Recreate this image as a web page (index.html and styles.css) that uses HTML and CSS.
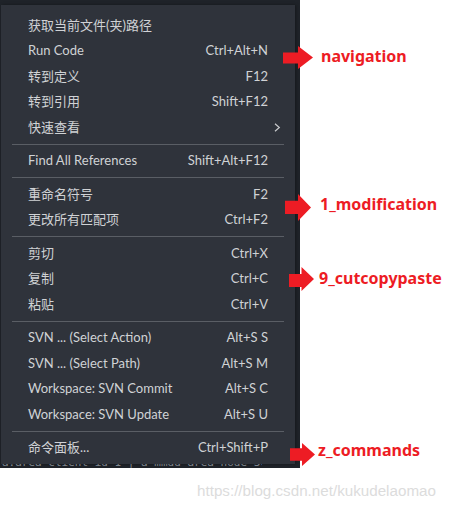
FILE: index.html
```html
<!DOCTYPE html>
<html lang="zh-CN">
<head>
<meta charset="utf-8">
<title>Context menu</title>
<link rel="stylesheet" href="styles.css">
</head>
<body>
<div class="canvas">
  <div class="editor">
    <div class="menu">
      <div class="row"><span class="label">获取当前文件(夹)路径</span><span class="key"></span></div>
      <div class="row"><span class="label">Run Code</span><span class="key">Ctrl+Alt+N</span></div>
      <div class="row"><span class="label">转到定义</span><span class="key">F12</span></div>
      <div class="row"><span class="label">转到引用</span><span class="key">Shift+F12</span></div>
      <div class="row"><span class="label">快速查看</span><span class="key"></span>
        <svg class="chev" width="7" height="9" viewBox="0 0 7 9"><polyline points="1,0.8 5.3,4.5 1,8.2" fill="none" stroke="#c8cacd" stroke-width="1.2"/></svg>
      </div>
      <div class="sep"></div>
      <div class="row"><span class="label">Find All References</span><span class="key">Shift+Alt+F12</span></div>
      <div class="sep"></div>
      <div class="row"><span class="label">重命名符号</span><span class="key">F2</span></div>
      <div class="row"><span class="label">更改所有匹配项</span><span class="key">Ctrl+F2</span></div>
      <div class="sep"></div>
      <div class="row"><span class="label">剪切</span><span class="key">Ctrl+X</span></div>
      <div class="row"><span class="label">复制</span><span class="key">Ctrl+C</span></div>
      <div class="row"><span class="label">粘贴</span><span class="key">Ctrl+V</span></div>
      <div class="sep"></div>
      <div class="row"><span class="label">SVN ... (Select Action)</span><span class="key">Alt+S S</span></div>
      <div class="row"><span class="label">SVN ... (Select Path)</span><span class="key">Alt+S M</span></div>
      <div class="row"><span class="label">Workspace: SVN Commit</span><span class="key">Alt+S C</span></div>
      <div class="row"><span class="label">Workspace: SVN Update</span><span class="key">Alt+S U</span></div>
      <div class="sep"></div>
      <div class="row"><span class="label">命令面板...</span><span class="key">Ctrl+Shift+P</span></div>
    </div>
    <div class="peek"><span>a.area client-id 1 | a-mmdd area-node 3c</span></div>
  </div>
  <div class="watermark">https://blog.csdn.net/kukudelaomao</div>

  <svg class="arrow a1" width="30" height="23" viewBox="0 0 30 23"><polygon points="0,6.5 15,6.5 15,0 30,11.5 15,23 15,17.5 0,17.5" fill="#ed1c24"/></svg>
  <span class="note t1">navigation</span>

  <svg class="arrow a2" width="26" height="27" viewBox="0 0 26 27"><polygon points="0,6.8 13,6.8 13,0 26,13.5 13,27 13,20 0,20" fill="#ed1c24"/></svg>
  <span class="note t2">1_modification</span>

  <svg class="arrow a3" width="25" height="24" viewBox="0 0 25 24"><polygon points="0,7 12.5,7 12.5,0 25,12 12.5,24 12.5,20 0,20" fill="#ed1c24"/></svg>
  <span class="note t3">9_cutcopypaste</span>

  <svg class="arrow a4" width="25" height="23" viewBox="0 0 25 23"><polygon points="0,5.3 12,5.3 12,0 25,11.5 12,23 12,17.7 0,17.7" fill="#ed1c24"/></svg>
  <span class="note t4">z_commands</span>
</div>
</body>
</html>
```

FILE: styles.css
```css
html, body {
  margin: 0;
  padding: 0;
  background: #ffffff;
}

.canvas {
  position: relative;
  width: 456px;
  height: 508px;
  overflow: hidden;
  background: #ffffff;
}

.editor {
  width: 300px;
  height: 468px;
  background: #1f2329;
  padding-top: 5px;
  box-sizing: border-box;
  display: flex;
  flex-direction: column;
}

.menu {
  width: 294px;
  margin-left: 1px;
  background: #2f333b;
  padding: 7.5px 0 3.5px 0;
  box-shadow: 1px 0 3px rgba(0, 0, 0, 0.35);
  font-family: Lato, "Noto Sans CJK SC", sans-serif;
  font-size: 13px;
  color: #d0d2d5;
}

.row {
  display: grid;
  grid-template-columns: 1fr auto 27px;
  align-items: center;
  height: 25.5px;
  line-height: 25.5px;
  padding-left: 27px;
  white-space: nowrap;
}

.key {
  text-align: right;
}

.chev {
  display: block;
  margin-left: 6px;
}

.sep {
  height: 1px;
  margin: 3.5px 11px 3.5px 11px;
  background: #5a5e65;
}

.peek {
  width: 260px;
  height: 4px;
  overflow: hidden;
  padding-left: 2px;
  font-family: "DejaVu Sans Mono", monospace;
  font-size: 11px;
  line-height: 12px;
  color: #7f858d;
  white-space: nowrap;
}

.peek span {
  display: block;
  margin-top: -7px;
}

.watermark {
  margin-top: 14px;
  padding-left: 197px;
  font-family: "Liberation Sans", Arial, sans-serif;
  font-size: 15.2px;
  line-height: 18px;
  color: #dcdcdc;
  white-space: nowrap;
}

.arrow {
  position: absolute;
  display: block;
}

.a1 { left: 283px; top: 46px; }
.a2 { left: 285px; top: 194px; }
.a3 { left: 289px; top: 267px; }
.a4 { left: 290px; top: 443px; }

.note {
  position: absolute;
  font-family: "Noto Sans", sans-serif;
  font-weight: 700;
  font-size: 16px;
  line-height: 20px;
  color: #ed1c24;
  white-space: nowrap;
}

.t1 { left: 321px; top: 46px; }
.t2 { left: 320px; top: 194px; }
.t3 { left: 319px; top: 268px; }
.t4 { left: 318px; top: 440px; }
```
